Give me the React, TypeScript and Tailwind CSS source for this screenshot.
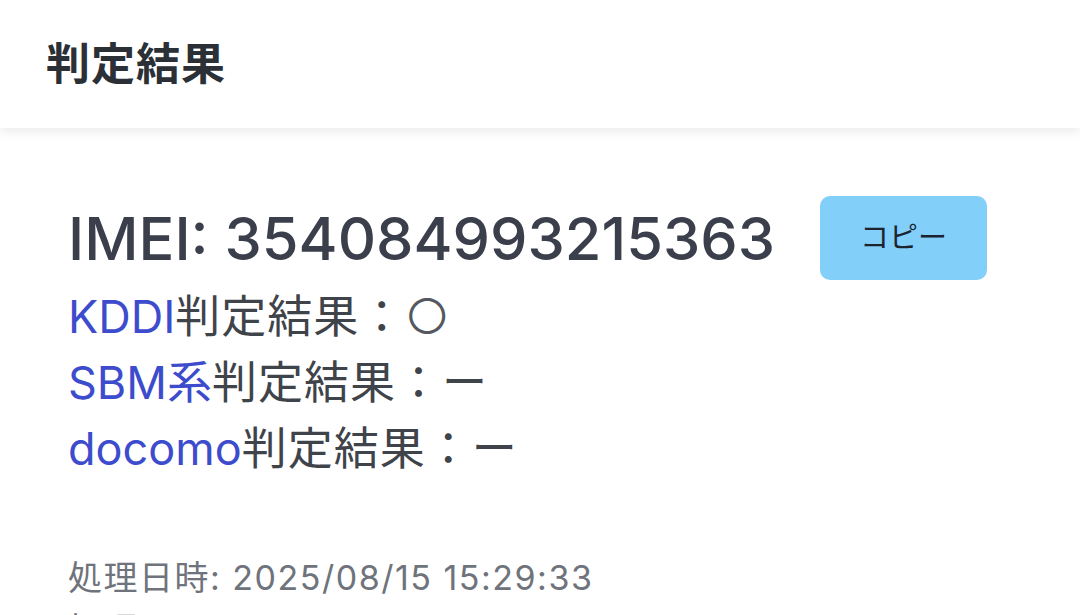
import React from 'react';

const carriers = [
  { name: 'KDDI', result: '○', light: true },
  { name: 'SBM系', result: 'ー', light: false },
  { name: 'docomo', result: 'ー', light: false },
];

const App: React.FC = () => {
  return (
    <div
      className="h-screen bg-white overflow-hidden"
      style={{ fontFamily: 'Inter, "Noto Sans CJK JP", sans-serif' }}
    >
      {/* Header */}
      <header className="h-[128px] bg-white flex items-center px-[46px] shadow-[0_4px_10px_rgba(0,0,0,0.08)] relative z-10">
        <h1 className="text-[44px] font-semibold text-[#2b2f36] tracking-[1px]">判定結果</h1>
      </header>

      {/* Result */}
      <main className="pl-[68px] pt-[68px]">
        <div className="flex items-center gap-[45px]">
          <p className="text-[59.5px] leading-[84px] font-medium text-[#3a3f4b]">IMEI: 354084993215363</p>
          <button className="w-[167px] h-[84px] rounded-[10px] bg-[#82cffa] text-[29px] text-[#1c2430]">
            コピー
          </button>
        </div>
        <div className="mt-[3px]">
          {carriers.map((c) => (
            <p key={c.name} className="text-[45px] leading-[66px] text-[#3f434a] tracking-[1px]">
              <span className="text-[#3d4ccc] tracking-normal">{c.name}</span>判定結果：
              <span className={c.light ? 'text-[48px] font-light text-[#55595f]' : 'text-[#3f434a]'}>{c.result}</span>
            </p>
          ))}
        </div>
        <div className="mt-[70px] text-[34px] leading-[52px] text-[#6f737b] tracking-[1.5px]">
          <p>処理日時: 2025/08/15 15:29:33</p>
          <p>処理ID: 20250815-152933-0471</p>
        </div>
      </main>
    </div>
  );
};

export default App;
